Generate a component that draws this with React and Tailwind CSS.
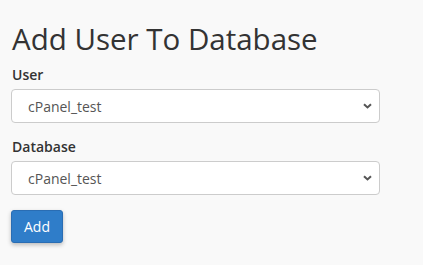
import React from "react";

function Chevron() {
  return (
    <svg
      className="pointer-events-none absolute right-[8px] top-1/2 -translate-y-1/2"
      width="9"
      height="6"
      viewBox="0 0 9 6"
      fill="none"
    >
      <path d="M1 1.2 L4.5 4.5 L8 1.2" stroke="#555" strokeWidth="2" />
    </svg>
  );
}

function Field({ label, value }) {
  return (
    <div className="flex flex-col">
      <label className="pl-px text-[14px] leading-[20px] font-semibold text-[#333] mb-[4px]">
        {label}
      </label>
      <div className="relative w-[369px]">
        <select
          className="appearance-none w-full h-[34px] rounded-[4px] border border-[#ccc] bg-white pl-[16px] pr-[24px] text-[14px] text-[#555] outline-none"
          style={{ fontFamily: '"Open Sans", sans-serif' }}
          defaultValue={value}
        >
          <option value={value}>{value}</option>
        </select>
        <Chevron />
      </div>
    </div>
  );
}

export default function App() {
  return (
    <div
      className="w-[423px] h-[265px] bg-[#f9f9f9] pl-[11px] pt-[22px] text-[#333]"
      style={{ fontFamily: '"Open Sans", sans-serif' }}
    >
      <h1 className="pl-px text-[29.5px] leading-[33px] font-normal text-[#333] mb-[10px]">
        Add User To Database
      </h1>
      <div className="flex flex-col gap-[14px]">
        <Field label="User" value="cPanel_test" />
        <Field label="Database" value="cPanel_test" />
        <div className="pt-px">
          <button className="h-[33px] w-[52px] rounded-[3px] border border-[#2a6db3] bg-[#2f7dc9] text-[14px] text-white shadow-[0_2px_4px_rgba(0,0,0,0.25)]">
            Add
          </button>
        </div>
      </div>
    </div>
  );
}
